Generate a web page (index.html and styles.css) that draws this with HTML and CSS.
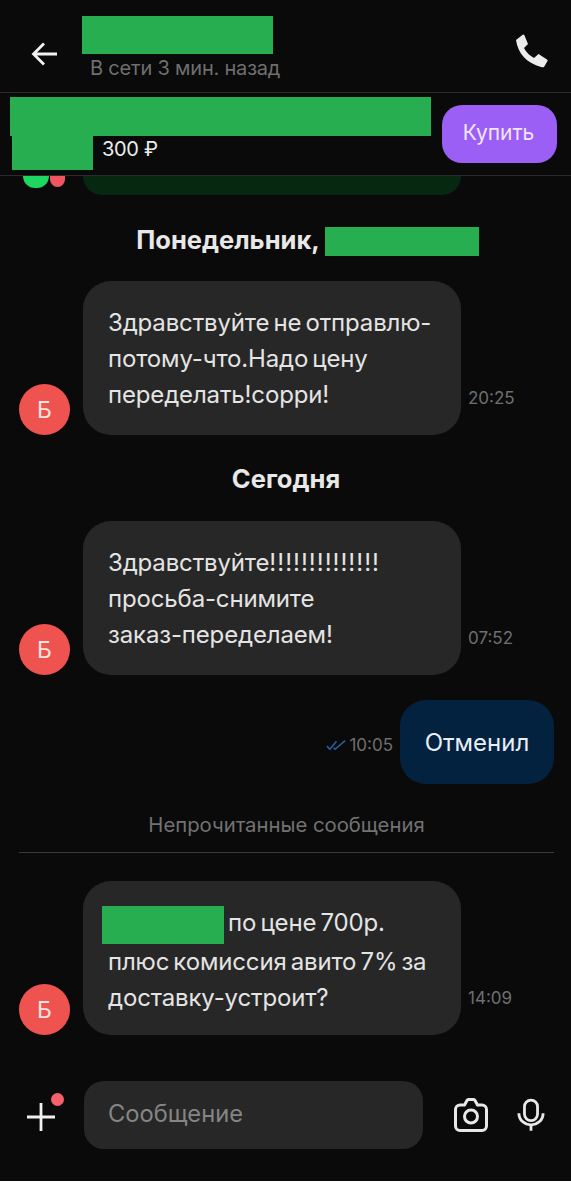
FILE: index.html
```html
<!DOCTYPE html>
<html lang="ru">
<head>
    <meta charset="UTF-8">
    <meta name="viewport" content="width=device-width, initial-scale=1.0">
    <title>Чат</title>
    <link rel="stylesheet" href="styles.css">
</head>
<body>
    <div class="app">
        <header class="topbar">
            <svg class="back-icon" viewBox="0 0 28 26" aria-hidden="true">
                <path d="M26 13H3M13 2.500 2.500 13 13 23.500"/>
            </svg>
            <div class="peer">
                <div class="redact redact-name"></div>
                <div class="peer-status">В сети 3 мин. назад</div>
            </div>
            <svg class="phone-icon" viewBox="0 0 34 34" aria-hidden="true">
                <path d="M1 6 8 .5Q9 .5 9.500 1.500L13 10 9 14Q12 20 19 24L23.500 20 32 25.500Q33 26 32.500 27L29 33Q28 33.500 26 33C12 29 3 20 1 6Z"/>
            </svg>
        </header>

        <section class="product">
            <div class="redact redact-title"></div>
            <div class="redact redact-seller"></div>
            <div class="product-price">300 ₽</div>
            <button class="buy">Купить</button>
        </section>

        <div class="chat">
            <div class="peek">
                <div class="peek-avatars">
                    <span class="dot-green"></span>
                    <span class="dot-red"></span>
                </div>
                <div class="peek-bubble"></div>
            </div>

            <div class="day day-first">Понедельник, <span class="redact redact-date"></span></div>

            <div class="msg">
                <div class="avatar">Б</div>
                <div class="bubble">Здравствуйте не отправлю-<br>потому-что.Надо цену<br>переделать!сорри!</div>
                <div class="time">20:25</div>
            </div>

            <div class="day day-today">Сегодня</div>

            <div class="msg">
                <div class="avatar">Б</div>
                <div class="bubble">Здравствуйте<span class="bangs">!!!!!!!!!!!!!!</span><br>просьба-снимите<br>заказ-переделаем!</div>
                <div class="time">07:52</div>
            </div>

            <div class="msg-out">
                <svg class="ticks" viewBox="0 0 22 12" aria-hidden="true">
                    <path d="M1 7l3 3.500L11 2M8 9l1.500 1.500L20 1.500"/>
                </svg>
                <div class="time-out">10:05</div>
                <div class="bubble-out">Отменил</div>
            </div>

            <div class="unread">Непрочитанные сообщения</div>

            <div class="msg">
                <div class="avatar">Б</div>
                <div class="bubble"><span class="redact redact-item"></span> по цене 700р.<br>плюс комиссия авито 7% за<br>доставку-устроит?</div>
                <div class="time">14:09</div>
            </div>
        </div>

        <footer class="composer">
            <div class="add">
                <svg class="plus-icon" viewBox="0 0 30 30" aria-hidden="true">
                    <path d="M15 1v28M1 15h28"/>
                </svg>
                <span class="add-dot"></span>
            </div>
            <div class="input">Сообщение</div>
            <svg class="camera-icon" viewBox="0 0 36 36" aria-hidden="true">
                <path d="M7 8h4.500l2.500-4.500a2 2 0 0 1 1.500-1h5a2 2 0 0 1 1.500 1L24.500 8H29a4.500 4.500 0 0 1 4.500 4.500V29a4.500 4.500 0 0 1-4.500 4.500H7A4.500 4.500 0 0 1 2.500 29V12.500A4.500 4.500 0 0 1 7 8z"/>
                <circle cx="18" cy="19.500" r="6.500"/>
            </svg>
            <svg class="mic-icon" viewBox="0 0 30 36" aria-hidden="true">
                <rect x="8" y="2" width="14" height="22" rx="7"/>
                <path d="M2 16c0 7.500 6 12.500 13 12.500S28 23.500 28 16M15 28.500V35"/>
            </svg>
        </footer>
    </div>
</body>
</html>
```

FILE: styles.css
```css
* {
    box-sizing: border-box;
}

html, body {
    margin: 0;
    padding: 0;
    background: #fff;
}

body {
    font-family: 'Inter', 'Noto Sans', sans-serif;
    color: #e4e4e4;
    overflow: hidden;
}

.app {
    width: 571px;
    height: 1181px;
    background: #0a0a0b;
    display: flex;
    flex-direction: column;
    overflow: hidden;
}

.redact {
    background: #27ae50;
}

/* top bar */
.topbar {
    height: 93px;
    flex-shrink: 0;
    border-bottom: 1px solid #2c2c2c;
    display: flex;
    align-items: flex-start;
    position: relative;
}

.back-icon {
    width: 28px;
    height: 26px;
    margin: 41px 0 0 31px;
    fill: none;
    stroke: #f2f2f2;
    stroke-width: 2.800;
}

.peer {
    margin: 16px 0 0 23px;
}

.redact-name {
    width: 191px;
    height: 38px;
}

.peer-status {
    margin: 2px 0 0 8px;
    font-size: 20px;
    letter-spacing: -0.2px;
    line-height: 24px;
    color: #6f6f6f;
}

.phone-icon {
    width: 34px;
    height: 34px;
    margin: 34px 22px 0 auto;
    fill: #ececec;
}

/* product */
.product {
    height: 83px;
    flex-shrink: 0;
    border-bottom: 1px solid #2c2c2c;
    position: relative;
}

.redact-title {
    position: absolute;
    left: 10px;
    top: 4px;
    width: 421px;
    height: 39px;
}

.redact-seller {
    position: absolute;
    left: 12px;
    top: 43px;
    width: 81px;
    height: 34px;
}

.product-price {
    position: absolute;
    left: 102px;
    top: 44px;
    font-size: 20px;
    letter-spacing: -0.3px;
    line-height: 24px;
    color: #ececec;
}

.buy {
    position: absolute;
    left: 442px;
    top: 12px;
    width: 115px;
    height: 58px;
    padding: 0 2px 4px 0;
    border: none;
    border-radius: 20px;
    background: #9c5ff5;
    color: #f0e6ff;
    font-family: inherit;
    font-size: 21px;
}

/* messages */
.chat {
    flex: 1;
    display: flex;
    flex-direction: column;
}

.peek {
    height: 19px;
    flex-shrink: 0;
    display: flex;
    align-items: flex-start;
    padding-left: 23px;
}

.peek-avatars {
    width: 60px;
    display: flex;
    align-items: flex-start;
    gap: 1px;
}

.dot-green {
    width: 26px;
    height: 12px;
    background: #1ed760;
    border-radius: 0 0 13px 13px;
}

.dot-red {
    width: 15px;
    height: 11px;
    background: #ef5560;
    border-radius: 0 0 8px 8px;
}

.peek-bubble {
    width: 378px;
    height: 19px;
    background: #062810;
    border-radius: 0 0 24px 24px;
}

.day {
    height: 86px;
    flex-shrink: 0;
    display: flex;
    align-items: center;
    justify-content: center;
    font-size: 25.500px;
    font-weight: 700;
    color: #e8e8e8;
}

.day-first {
    gap: 5px;
    padding: 3px 0 0 44px;
}

.day-today {
    padding: 1px 0 0 1px;
}

.redact-date {
    width: 154px;
    height: 29px;
    margin-top: 4px;
}

.msg {
    display: flex;
    align-items: flex-end;
    padding-left: 19px;
    flex-shrink: 0;
}

.avatar {
    width: 51px;
    height: 51px;
    border-radius: 50%;
    background: #ef5350;
    color: #fbe4e2;
    font-size: 23px;
    display: flex;
    align-items: center;
    justify-content: center;
    flex-shrink: 0;
}

.bubble {
    width: 378px;
    height: 154px;
    margin-left: 13px;
    padding: 24px 0 0 25px;
    background: #272727;
    border-radius: 28px;
    font-size: 24px;
    letter-spacing: -0.15px;
    word-spacing: -2.500px;
    line-height: 36px;
    white-space: nowrap;
}

.bangs {
    letter-spacing: 1px;
}

.redact-item {
    display: inline-block;
    width: 122px;
    height: 38px;
    margin-left: -6px;
    vertical-align: -13px;
}

.time {
    margin: 0 0 27px 7px;
    font-size: 17px;
    line-height: 20px;
    color: #6f6f6f;
}

.msg-out {
    margin-top: 25px;
    padding-right: 17px;
    display: flex;
    justify-content: flex-end;
    align-items: center;
    flex-shrink: 0;
}

.ticks {
    width: 21px;
    height: 12px;
    margin-top: 6px;
    fill: none;
    stroke: #2a5f9e;
    stroke-width: 1.600;
}

.time-out {
    margin: 6px 7px 0 2px;
    font-size: 17px;
    color: #6f6f6f;
}

.bubble-out {
    width: 154px;
    height: 84px;
    background: #02223f;
    border-radius: 26px;
    display: flex;
    align-items: center;
    justify-content: center;
    font-size: 24px;
    color: #e8eef4;
}

.unread {
    margin: 27px 17px 28px 19px;
    padding-bottom: 13px;
    border-bottom: 1px solid #3a3a3a;
    text-align: center;
    font-size: 20.300px;
    line-height: 28px;
    color: #727272;
    flex-shrink: 0;
}

/* bottom input */
.composer {
    flex-shrink: 0;
    height: 100px;
    padding-bottom: 32px;
    display: flex;
    align-items: center;
}

.add {
    width: 84px;
    height: 68px;
    position: relative;
    flex-shrink: 0;
}

.plus-icon {
    position: absolute;
    left: 26px;
    top: 21px;
    width: 30px;
    height: 30px;
    fill: none;
    stroke: #f0f0f0;
    stroke-width: 2.800;
}

.add-dot {
    position: absolute;
    left: 51px;
    top: 12px;
    width: 13px;
    height: 13px;
    border-radius: 50%;
    background: #f4606c;
}

.input {
    width: 339px;
    height: 68px;
    padding: 0 0 3px 24px;
    background: #272727;
    border-radius: 20px;
    display: flex;
    align-items: center;
    font-size: 23.700px;
    color: #858585;
}

.camera-icon {
    width: 36px;
    height: 36px;
    margin-left: 30px;
    fill: none;
    stroke: #e8e8e8;
    stroke-width: 3px;
}

.mic-icon {
    width: 28px;
    height: 34px;
    margin-left: 28px;
    fill: none;
    stroke: #e8e8e8;
    stroke-width: 3px;
}
```
